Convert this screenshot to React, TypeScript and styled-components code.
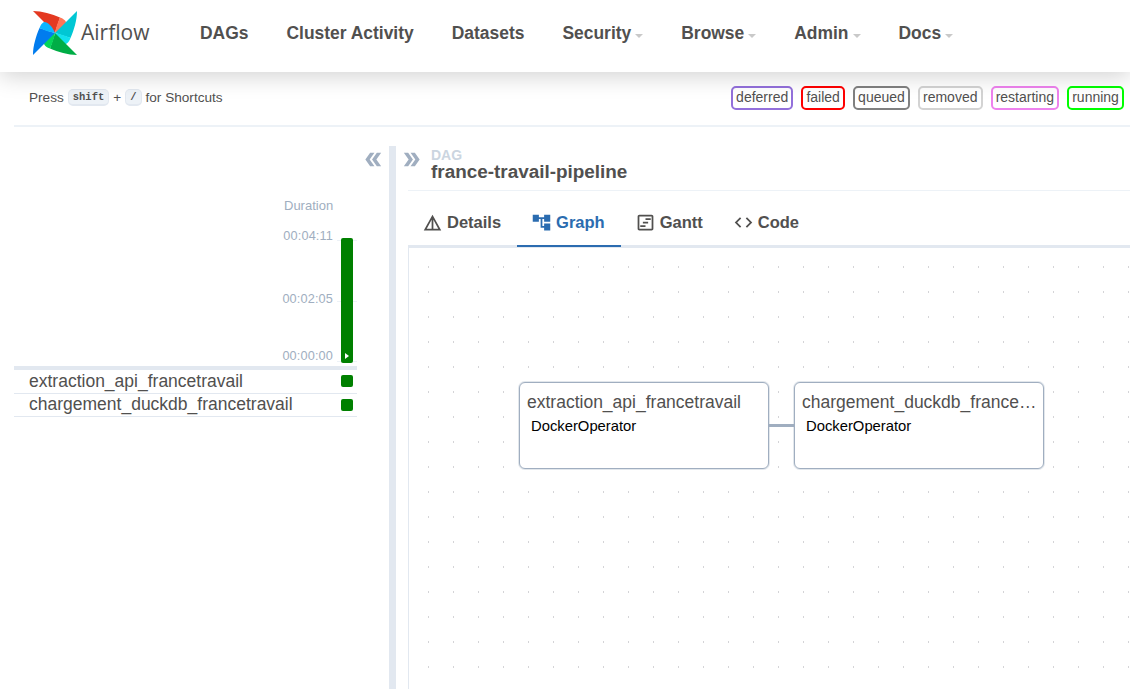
import React from "react";
import styled, { createGlobalStyle } from "styled-components";
import { MdDetails, MdAccountTree, MdOutlineViewTimeline, MdCode, MdDoubleArrow } from "react-icons/md";

const Global = createGlobalStyle`
  html, body { margin: 0; padding: 0; height: 100%; overflow: hidden; background: #fff; }
  body { font-family: "Liberation Sans", Arial, sans-serif; color: #51504f; }
  #root { height: 100%; }
`;

const Page = styled.div`
  height: 689px;
  width: 1130px;
  display: flex;
  flex-direction: column;
  overflow: hidden;
`;

const Navbar = styled.nav`
  height: 72px;
  flex: none;
  display: flex;
  align-items: center;
  padding-left: 32px;
  background: #fff;
  box-shadow: 0 4px 22px rgba(0, 0, 0, 0.18);
  position: relative;
  z-index: 2;
`;

const Brand = styled.div`
  display: flex;
  align-items: center;
  width: 149px;
  margin-top: -6px;
`;

const BrandName = styled.span`
  font-family: "Open Sans", sans-serif;
  font-size: 21px;
  margin-left: 3px;
  margin-top: -2px;
  color: #51504f;
`;

const NavItem = styled.a`
  display: flex;
  align-items: center;
  font-size: 17.45px;
  font-weight: 700;
  color: #51504f;
  margin-left: 19px;
  margin-right: 19px;
  margin-top: -5px;
  white-space: nowrap;
`;

const Caret = styled.span`
  width: 0;
  height: 0;
  margin-left: 4px;
  margin-top: 4px;
  border-left: 4.5px solid transparent;
  border-right: 4.5px solid transparent;
  border-top: 4px solid #c9c9c9;
`;

const Toolbar = styled.div`
  height: 55px;
  flex: none;
  margin-left: 14px;
  padding: 0 6px 0 15px;
  display: flex;
  align-items: center;
  justify-content: space-between;
  border-bottom: 2px solid #edf2f7;
  box-sizing: border-box;
  font-size: 13.6px;
`;

const Hint = styled.div`
  display: flex;
  align-items: center;
  gap: 4px;
  margin-top: -2px;
`;

const Kbd = styled.kbd`
  font-family: "Liberation Mono", monospace;
  font-size: 10.5px;
  font-weight: 700;
  background: #edf2f7;
  border: 1px solid #e2e8f0;
  border-bottom-width: 2px;
  border-radius: 5px;
  padding: 0 4px;
  height: 14px;
  line-height: 14px;
  color: #51504f;
`;

const Legend = styled.div`
  display: flex;
  gap: 8px;
  margin-top: -2px;
`;

const Badge = styled.span<{ $color: string }>`
  border: 2px solid ${(p) => p.$color};
  border-radius: 5px;
  height: 24px;
  box-sizing: border-box;
  line-height: 19px;
  padding: 0 3.1px;
  font-size: 14px;
  color: #51504f;
`;

const Content = styled.div`
  flex: 1;
  min-height: 0;
  display: flex;
  margin-left: 14px;
  margin-top: -1px;
`;

const LeftPane = styled.section`
  width: 343px;
  flex: none;
  display: flex;
  flex-direction: column;
`;

const ChartHead = styled.div`
  height: 244px;
  flex: none;
  box-sizing: border-box;
  padding: 73px 4px 0 0;
  display: flex;
  flex-direction: column;
  border-bottom: 4px solid #e2e8f0;
`;

const DurationTitle = styled.div`
  font-size: 13px;
  color: #a0aec0;
  margin-left: 270px;
  line-height: 14px;
`;

const ChartBody = styled.div`
  display: flex;
  justify-content: flex-end;
  margin-top: 25px;
  height: 125px;
  position: relative;
`;

const Ticks = styled.div`
  position: absolute;
  right: -4px;
  top: 2px;
  width: 20px;
  height: 122px;
  display: flex;
  flex-direction: column;
  justify-content: space-between;
`;

const Tick = styled.span`
  display: block;
  height: 1px;
  background: #edf2f7;
`;

const Axis = styled.div`
  display: flex;
  flex-direction: column;
  align-items: flex-end;
  margin-right: 8px;
  font-size: 12.7px;
  color: #a0aec0;
  line-height: 14px;
  margin-top: -9px;
  letter-spacing: 0.15px;
`;

const AxisLabel = styled.span<{ $gap: number }>`
  margin-top: ${(p) => p.$gap}px;
`;

const Bar = styled.div`
  width: 12px;
  height: 125px;
  background: #008000;
  border-radius: 2px;
  display: flex;
  align-items: flex-end;
  justify-content: center;
  padding-bottom: 3px;
  box-sizing: border-box;
  position: relative;
`;

const PlayMark = styled.span`
  width: 0;
  height: 0;
  border-left: 4px solid #fff;
  border-top: 3px solid transparent;
  border-bottom: 3px solid transparent;
  margin-bottom: 1px;
`;

const TaskRow = styled.div`
  height: 23.5px;
  box-sizing: border-box;
  border-bottom: 1px solid #e2e8f0;
  display: flex;
  align-items: center;
  justify-content: space-between;
  padding: 0 4px 0 15px;
  font-size: 17.5px;
`;

const Square = styled.span`
  width: 12px;
  height: 12px;
  border-radius: 2px;
  background: #008000;
`;

const CollapseColumn = styled.div`
  width: 32px;
  flex: none;
  color: #a0aec0;
  display: flex;
  justify-content: center;
  padding-top: 22px;
  font-size: 23px;
  box-sizing: border-box;
`;

const Divider = styled.div`
  width: 7px;
  flex: none;
  background: #e2e8f0;
  margin-top: 20px;
`;

const ExpandColumn = styled.div`
  width: 12px;
  flex: none;
  position: relative;
  color: #a0aec0;
  font-size: 23px;
`;

const ExpandIcon = styled.span`
  position: absolute;
  left: 4px;
  top: 22px;
  display: block;
  line-height: 0;
`;

const RightPane = styled.section`
  flex: 1;
  min-width: 0;
  display: flex;
  flex-direction: column;
`;

const DagHeader = styled.header`
  height: 65px;
  flex: none;
  box-sizing: border-box;
  padding: 22px 0 0 23px;
  border-bottom: 1px solid #edf2f7;
`;

const DagLabel = styled.div`
  font-size: 14px;
  font-weight: 700;
  color: #cbd5e0;
  line-height: 14px;
`;

const DagTitle = styled.div`
  font-size: 18.9px;
  font-weight: 700;
  line-height: 20px;
  color: #51504f;
`;

const Tabs = styled.div`
  height: 56px;
  flex: none;
  display: flex;
  align-items: stretch;
  padding-top: 9px;
  box-sizing: border-box;
`;

const Tab = styled.div<{ $active?: boolean }>`
  display: flex;
  align-items: center;
  gap: 4px;
  padding: 0 16px;
  font-size: 16.5px;
  font-weight: 700;
  color: ${(p) => (p.$active ? "#2b6cb0" : "#51504f")};
  border-bottom: 2px solid ${(p) => (p.$active ? "#2b6cb0" : "transparent")};
  position: relative;
  z-index: 1;
  box-sizing: border-box;

  svg {
    margin-left: -2px;
  }
`;

const Canvas = styled.div`
  flex: 1;
  position: relative;
  border-top: 3px solid #e2e8f0;
  border-left: 1px solid #e2e8f0;
  margin-top: -2px;
  background-color: #fff;
  background-image: radial-gradient(circle, #a8a8ae 0.8px, transparent 1px);
  background-size: 25px 25px;
  background-position: 7px 6.5px;
`;

const Node = styled.div<{ $left: number }>`
  position: absolute;
  left: ${(p) => p.$left}px;
  top: 134px;
  width: 250px;
  height: 87px;
  box-sizing: border-box;
  background: #fff;
  border: 1px solid #a0aec0;
  box-shadow: 0 0 0 1px rgba(160, 174, 192, 0.3);
  border-radius: 6px;
  padding: 9px 4px 8px 7px;
`;

const NodeTitle = styled.div`
  font-size: 17.5px;
  line-height: 21px;
  color: #51504f;
  white-space: nowrap;
  overflow: hidden;
  text-overflow: ellipsis;
`;

const NodeType = styled.div`
  font-size: 14.8px;
  color: #000;
  margin: 5px 0 0 4px;
  line-height: 16px;
`;

const Edge = styled.div`
  position: absolute;
  left: 360px;
  top: 176px;
  width: 25px;
  height: 3px;
  background: #a0aec0;
`;

const Pinwheel = () => (
  <svg width="46" height="46" viewBox="-23 -23 46 46" aria-hidden>
    {[
      ["#e43921", "#ff7557", 0],
      ["#00c7d4", "#11e1ee", 90],
      ["#00ad46", "#04d659", 180],
      ["#017cee", "#0cb6ff", 270],
    ].map(([dark, light, rot]) => (
      <g key={String(rot)} transform={`rotate(${rot})`}>
        <path d="M0 0 L-22 -22 C-13 -22 -3 -19 5 -15.5 C3 -9 1 -4 0 0 Z" fill={String(dark)} />
        <path d="M0 0 C1 -6 3 -11 5 -15.5 C8 -14.5 10 -13 11 -11 C11 -6 5 -2 0 0 Z" fill={String(light)} />
      </g>
    ))}
  </svg>
);

const navItems: [string, boolean][] = [
  ["DAGs", false],
  ["Cluster Activity", false],
  ["Datasets", false],
  ["Security", true],
  ["Browse", true],
  ["Admin", true],
  ["Docs", true],
];

const legend: [string, string][] = [
  ["deferred", "mediumpurple"],
  ["failed", "red"],
  ["queued", "gray"],
  ["removed", "lightgrey"],
  ["restarting", "violet"],
  ["running", "lime"],
];

export default function App() {
  return (
    <Page>
      <Global />
      <Navbar>
        <Brand>
          <Pinwheel />
          <BrandName>Airflow</BrandName>
        </Brand>
        {navItems.map(([label, caret]) => (
          <NavItem key={label}>
            {label}
            {caret && <Caret />}
          </NavItem>
        ))}
      </Navbar>
      <Toolbar>
        <Hint>
          Press <Kbd>shift</Kbd> + <Kbd>/</Kbd> for Shortcuts
        </Hint>
        <Legend>
          {legend.map(([label, color]) => (
            <Badge key={label} $color={color}>
              {label}
            </Badge>
          ))}
        </Legend>
      </Toolbar>
      <Content>
        <LeftPane>
          <ChartHead>
            <DurationTitle>Duration</DurationTitle>
            <ChartBody>
              <Ticks>
                <Tick />
                <Tick />
                <Tick />
              </Ticks>
              <Axis>
                <AxisLabel $gap={0}>00:04:11</AxisLabel>
                <AxisLabel $gap={49}>00:02:05</AxisLabel>
                <AxisLabel $gap={43}>00:00:00</AxisLabel>
              </Axis>
              <Bar>
                <PlayMark />
              </Bar>
            </ChartBody>
          </ChartHead>
          <TaskRow>
            extraction_api_francetravail
            <Square />
          </TaskRow>
          <TaskRow>
            chargement_duckdb_francetravail
            <Square />
          </TaskRow>
        </LeftPane>
        <CollapseColumn>
          <MdDoubleArrow style={{ transform: "rotate(180deg)" }} />
        </CollapseColumn>
        <Divider />
        <ExpandColumn>
          <ExpandIcon>
            <MdDoubleArrow />
          </ExpandIcon>
        </ExpandColumn>
        <RightPane>
          <DagHeader>
            <DagLabel>DAG</DagLabel>
            <DagTitle>france-travail-pipeline</DagTitle>
          </DagHeader>
          <Tabs>
            <Tab>
              <MdDetails size={21} />
              Details
            </Tab>
            <Tab $active>
              <MdAccountTree size={21} />
              Graph
            </Tab>
            <Tab>
              <MdOutlineViewTimeline size={21} />
              Gantt
            </Tab>
            <Tab>
              <MdCode size={21} />
              Code
            </Tab>
          </Tabs>
          <Canvas>
            <Node $left={110}>
              <NodeTitle>extraction_api_francetravail</NodeTitle>
              <NodeType>DockerOperator</NodeType>
            </Node>
            <Edge />
            <Node $left={385}>
              <NodeTitle>chargement_duckdb_francetravail</NodeTitle>
              <NodeType>DockerOperator</NodeType>
            </Node>
          </Canvas>
        </RightPane>
      </Content>
    </Page>
  );
}
